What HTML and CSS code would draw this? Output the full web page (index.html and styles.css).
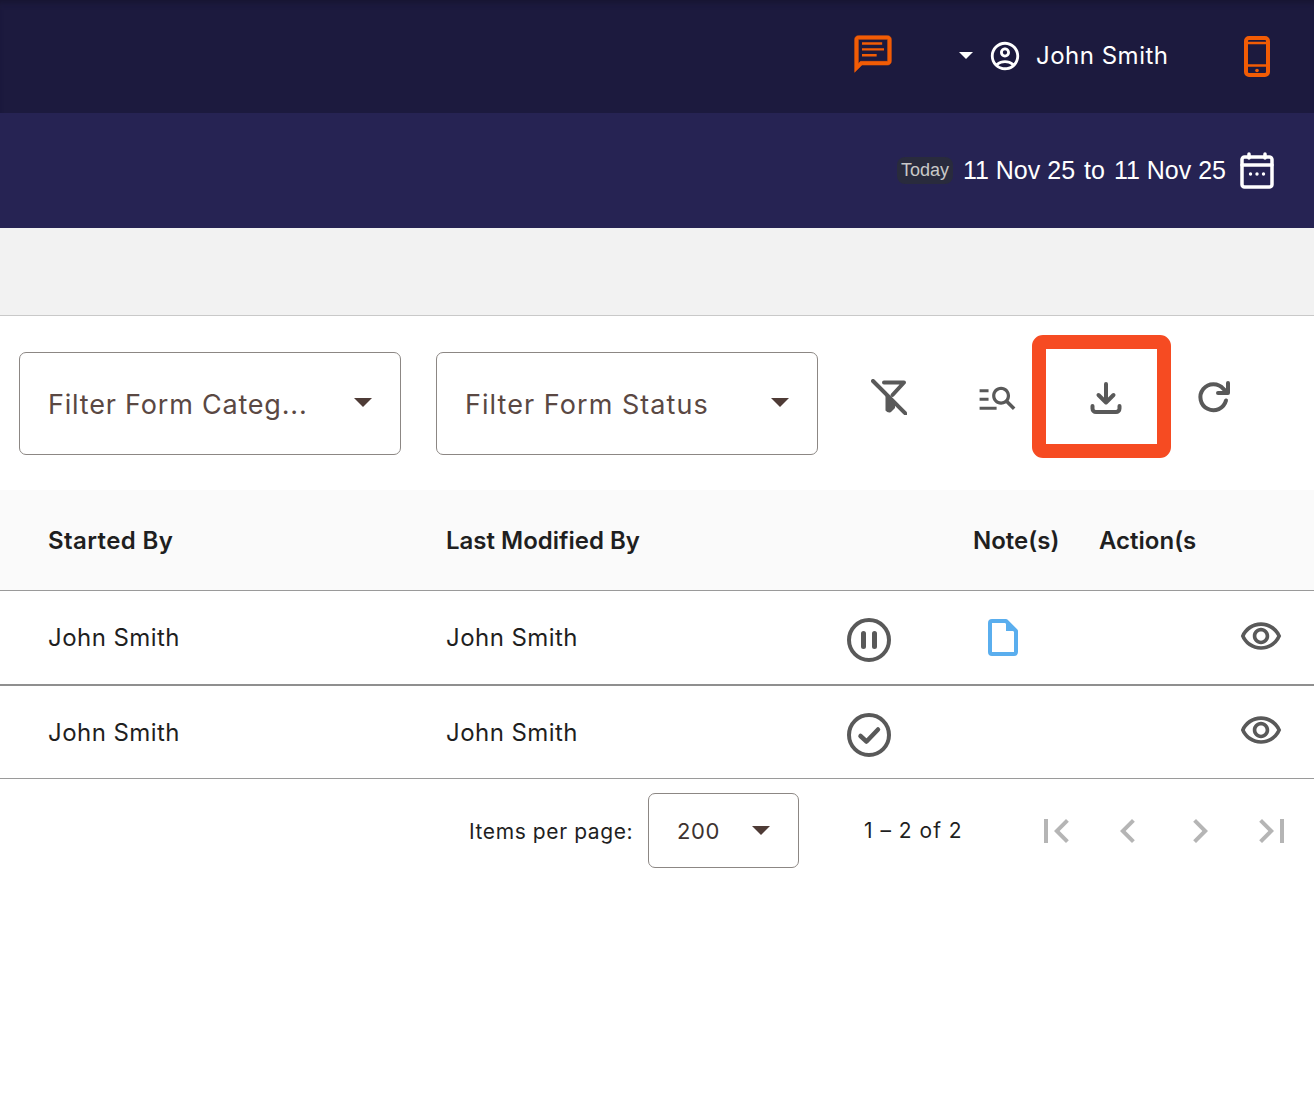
FILE: index.html
```html
<!DOCTYPE html>
<html lang="en">
<head>
<meta charset="utf-8">
<title>Forms</title>
<link rel="stylesheet" href="styles.css">
</head>
<body>
<header class="topbar">
  <svg class="ico-chat" viewBox="0 0 24 24"><path d="M20 2H4c-1.100 0-2 .9-2 2v18l4-4h14c1.100 0 2-.9 2-2V4c0-1.100-.9-2-2-2zm0 14H5.170L4 17.170V4h16v12z" class="chat-outline"/><path d="M6 12h8v1.300H6zm0-3.200h12v1.300H6zm0-3.200h11v1.300H6z"/></svg>
  <span class="caret caret-white"></span>
  <svg class="ico-user" viewBox="0 0 24 24"><path d="M12 2C6.480 2 2 6.480 2 12s4.480 10 10 10 10-4.480 10-10S17.520 2 12 2zM7.350 18.500C8.660 17.560 10.260 17 12 17s3.340.56 4.650 1.500C15.340 19.440 13.740 20 12 20s-3.340-.56-4.650-1.500zm10.790-1.380C16.450 15.800 14.320 15 12 15s-4.450.8-6.140 2.120C4.700 15.730 4 13.950 4 12c0-4.420 3.580-8 8-8s8 3.580 8 8c0 1.950-.7 3.730-1.860 5.120zM12 6c-1.930 0-3.500 1.570-3.500 3.500S10.070 13 12 13s3.500-1.570 3.500-3.500S13.930 6 12 6zm0 5c-.83 0-1.500-.67-1.500-1.500S11.170 8 12 8s1.500.67 1.500 1.500S12.830 11 12 11z"/></svg>
  <span class="user-name">John Smith</span>
  <svg class="ico-phone" viewBox="0 0 26 41"><rect x="2" y="2" width="22" height="37" rx="3" class="s-orange"/><path d="M2 7h22M2 29.500h22" class="s-orange s-thin"/><circle cx="13" cy="34.500" r="1.800" class="f-orange"/></svg>
</header>

<section class="datebar">
  <span class="chip">Today</span>
  <span class="date">11 Nov 25</span>
  <span class="date">to</span>
  <span class="date">11 Nov 25</span>
  <svg class="ico-cal" viewBox="0 0 34 37"><rect x="2" y="5" width="30" height="30" rx="2.500" class="s-white"/><path d="M2 13h30M9 2v4M25 2v4" class="s-white"/><circle cx="10.500" cy="22" r="1.700"/><circle cx="17" cy="22" r="1.700"/><circle cx="23.500" cy="22" r="1.700"/></svg>
</section>

<div class="band"></div>

<section class="toolbar">
  <div class="select"><span class="select-text select-text-tight">Filter Form Categ...</span><span class="caret caret-brown"></span></div>
  <div class="select"><span class="select-text">Filter Form Status</span><span class="caret caret-brown"></span></div>
  <div class="tools">
    <button class="tool">
      <svg class="ico-tool" viewBox="0 0 36 36"><path d="M13 3.500h20L21.500 16" class="s-grey"/><path d="M14 14 24 24v5l-4 4q-3 1.500-5.500-1.500V17z" class="f-grey"/><path d="M2 2l33 33" class="s-grey"/></svg>
    </button>
    <button class="tool">
      <svg class="ico-search" viewBox="0 0 24 24"><path d="M7 9H2V7.400h5zm0 3.200H2v1.600h5zM20.600 19l-3.800-3.800c-.8.5-1.800.8-2.800.8-2.800 0-5-2.200-5-5s2.200-5 5-5 5 2.200 5 5c0 1-.3 2-.8 2.800L22 17.600zM17.200 11c0-1.800-1.400-3.200-3.200-3.200S10.800 9.200 10.800 11s1.400 3.200 3.200 3.200 3.200-1.400 3.200-3.200zM2 18.800h9.500v-1.600H2z"/></svg>
    </button>
    <button class="tool tool-marked">
      <svg class="ico-tool" viewBox="0 0 36 36"><path d="M19 5v18M11.500 16 19 23.500l7.500-7.500M5.500 27v2.500a3.500 3.500 0 0 0 3.500 3.500h20a3.500 3.500 0 0 0 3.500-3.500V27" class="s-grey"/></svg>
      <span class="marker"></span>
    </button>
    <button class="tool">
      <svg class="ico-tool" viewBox="0 0 36 36"><path d="M31 21.500a13 13 0 1 1-2.500-11.500L33 14M33 4v10H23" class="s-grey"/></svg>
    </button>
  </div>
</section>

<section class="table">
  <div class="row row-head">
    <span class="cell head-wide">Started By</span>
    <span class="cell">Last Modified By</span>
    <span class="cell"></span>
    <span class="cell">Note(s)</span>
    <span class="cell">Action(s</span>
  </div>
  <div class="row row-first">
    <span class="cell">John Smith</span>
    <span class="cell">John Smith</span>
    <svg class="ico-status" viewBox="0 0 44 44"><circle cx="22" cy="22" r="20" class="s-grey"/><path d="M16.500 15.500v13M27.500 15.500v13" class="s-grey s-bold"/></svg>
    <svg class="ico-note" viewBox="0 0 30 37"><path d="M4 2h14L28 12v21a2 2 0 0 1-2 2H4a2 2 0 0 1-2-2V4a2 2 0 0 1 2-2z" class="s-blue"/><path d="M18 2 28 12H18z" class="f-blue"/></svg>
    <svg class="ico-eye" viewBox="0 0 24 24"><path d="M12 6c3.790 0 7.170 2.130 8.820 5.500C19.170 14.870 15.790 17 12 17s-7.170-2.130-8.820-5.500C4.830 8.130 8.210 6 12 6m0-2C7 4 2.730 7.110 1 11.500 2.730 15.890 7 19 12 19s9.270-3.110 11-7.500C21.270 7.110 17 4 12 4zm0 5c1.380 0 2.500 1.120 2.500 2.500S13.380 14 12 14s-2.500-1.120-2.500-2.500S10.620 9 12 9m0-2c-2.480 0-4.500 2.020-4.500 4.500S9.520 16 12 16s4.500-2.020 4.500-4.500S14.480 7 12 7z"/></svg>
  </div>
  <div class="row row-second">
    <span class="cell">John Smith</span>
    <span class="cell">John Smith</span>
    <svg class="ico-status ico-check" viewBox="0 0 44 44"><circle cx="22" cy="22" r="20" class="s-grey"/><path d="M13.500 23l6 5.500L31 16.500" class="s-grey s-check"/></svg>
    <span class="cell"></span>
    <svg class="ico-eye" viewBox="0 0 24 24"><path d="M12 6c3.790 0 7.170 2.130 8.820 5.500C19.170 14.870 15.790 17 12 17s-7.170-2.130-8.820-5.500C4.830 8.130 8.210 6 12 6m0-2C7 4 2.730 7.110 1 11.500 2.730 15.890 7 19 12 19s9.270-3.110 11-7.500C21.270 7.110 17 4 12 4zm0 5c1.380 0 2.500 1.120 2.500 2.500S13.380 14 12 14s-2.500-1.120-2.500-2.500S10.620 9 12 9m0-2c-2.480 0-4.500 2.020-4.500 4.500S9.520 16 12 16s4.500-2.020 4.500-4.500S14.480 7 12 7z"/></svg>
  </div>
</section>

<footer class="pager">
  <span class="pager-label">Items per page:</span>
  <div class="pager-select"><span>200</span><span class="caret caret-brown"></span></div>
  <span class="pager-range">1 – 2 of 2</span>
  <div class="pager-nav">
    <svg class="ico-page" viewBox="0 0 24 24"><path d="M18.410 16.590 13.820 12l4.590-4.590L17 6l-6 6 6 6zM6 6h2v12H6z"/></svg>
    <svg class="ico-page" viewBox="0 0 24 24"><path d="M15.410 7.410 14 6l-6 6 6 6 1.410-1.410L10.830 12z"/></svg>
    <svg class="ico-page" viewBox="0 0 24 24"><path d="M10 6 8.590 7.410 13.170 12l-4.580 4.590L10 18l6-6z"/></svg>
    <svg class="ico-page" viewBox="0 0 24 24"><path d="M5.590 7.410 10.180 12l-4.590 4.590L7 18l6-6-6-6zM16 6h2v12h-2z"/></svg>
  </div>
</footer>
</body>
</html>
```

FILE: styles.css
```css
* { box-sizing: border-box; }
body {
  margin: 0;
  background: #fff;
  color: #1c1c1c;
  font-family: Inter, "Noto Sans", sans-serif;
}
svg { display: block; fill: currentColor; }

.s-orange, .s-white, .s-grey, .s-blue { fill: none; stroke-width: 3; stroke-linecap: round; stroke-linejoin: round; }
.s-orange { stroke: #f25c05; stroke-width: 4; }
.s-thin { stroke-width: 2.5; }
.s-white { stroke: #fff; stroke-width: 3.5; }
.s-grey { stroke: #595959; stroke-width: 4; }
.s-bold { stroke-width: 5; }
.s-check { stroke-width: 4.500; }
.s-blue { stroke: #5aaeee; stroke-width: 4; }
.f-orange { fill: #f25c05; }
.f-grey { fill: #595959; }
.f-blue { fill: #5aaeee; }
.chat-outline { stroke: currentColor; stroke-width: .3; }

.caret { display: block; width: 0; height: 0; border-style: solid; border-color: transparent; border-bottom-width: 0; }
.caret-white { border-width: 7px 7px 0; border-top-color: #fff; }
.caret-brown { border-width: 9px 9px 0; border-top-color: #4e3b36; }

.topbar {
  height: 113px;
  background: #1c1a3e;
  box-shadow: inset 0 6px 6px -4px #16142f;
  color: #fff;
  display: flex;
  align-items: center;
  padding-right: 44px;
}
.ico-chat { width: 44px; height: 44px; margin-left: auto; margin-top: -6px; color: #f25c05; }
.topbar .caret { margin-left: 64px; margin-top: -2px; }
.ico-user { width: 34px; height: 34px; margin-left: 15px; margin-top: -2px; }
.user-name { margin-left: 14px; font-size: 24px; letter-spacing: .5px; width: 131px; white-space: nowrap; margin-top: -2px; }
.ico-phone { width: 26px; height: 41px; margin-left: 77px; }

.datebar {
  height: 115px;
  background: #262353;
  color: #fff;
  display: flex;
  justify-content: flex-end;
  align-items: center;
  gap: 9px;
  padding-right: 40px;
  font-family: "Liberation Sans", Arial, sans-serif;
}
.chip {
  background: #292b3d;
  color: #c8c8c8;
  font-size: 18px;
  border-radius: 8px;
  padding: 3px 4px;
  margin-right: 1px;
}
.date { font-size: 25px; }
.ico-cal { width: 34px; height: 37px; margin-left: 5px; color: #fff; }

.band { height: 88px; background: #f2f2f2; border-bottom: 1px solid #c9c9c9; }

.toolbar { display: flex; padding: 36px 0 35px 19px; gap: 35px; }
.select {
  width: 382px;
  height: 103px;
  border: 1px solid #8c8784;
  border-radius: 7px;
  display: flex;
  align-items: center;
  justify-content: space-between;
  padding: 0 28px;
  color: #5a4843;
}
.select-text { font-size: 27px; letter-spacing: 1.050px; white-space: nowrap; margin-top: 1px; }
.select-text-tight { letter-spacing: .8px; }
.select .caret { margin-top: -3px; }
.tools { display: flex; margin-left: -18px; }
.tool {
  width: 108px;
  height: 90px;
  padding: 0;
  border: 0;
  background: none;
  color: #595959;
  display: flex;
  align-items: center;
  justify-content: center;
  position: relative;
}
.ico-tool { width: 36px; height: 36px; }
.ico-search { width: 43px; height: 43px; }
.marker {
  position: absolute;
  left: -19px;
  top: -17px;
  width: 139px;
  height: 123px;
  border: 14px solid #f64b22;
  border-radius: 11px;
}

.row {
  display: grid;
  grid-template-columns: 398px 401px 126px 126px 1fr;
  align-items: center;
  padding-left: 48px;
  font-size: 24px;
  letter-spacing: .45px;
  color: #1f1f1f;
  white-space: nowrap;
}
.row-head { height: 101px; background: #fafafa; font-weight: 600; letter-spacing: 0; border-bottom: 1px solid #9a9a9a; }
.head-wide { letter-spacing: .4px; }
.row-first { height: 95px; border-bottom: 2px solid #8f8f8f; }
.row-second { height: 93px; border-bottom: 1px solid #9a9a9a; }
.ico-status { width: 44px; height: 44px; margin-top: 4px; }
.ico-check { margin-top: 5px; }
.ico-note { width: 30px; height: 37px; margin-left: 15px; }
.ico-eye { width: 44px; height: 44px; justify-self: end; margin-right: 31px; color: #595959; margin-top: -2px; }

.pager { display: flex; align-items: center; padding: 14px 0 0 469px; color: #1f1f1f; font-size: 21px; letter-spacing: .6px; }
.pager-label { width: 179px; white-space: nowrap; margin-top: 2px; }
.pager-select {
  width: 151px;
  height: 75px;
  border: 1px solid #8c8784;
  border-radius: 7px;
  display: flex;
  align-items: center;
  justify-content: space-between;
  padding: 0 28px;
  font-size: 22px;
  color: #3d3230;
}
.pager-range { margin-left: 65px; width: 133px; white-space: nowrap; letter-spacing: 1px; }
.pager-nav { display: flex; gap: 24px; margin-left: 35px; color: #b5b5b5; }
.ico-page { width: 48px; height: 48px; }
```
